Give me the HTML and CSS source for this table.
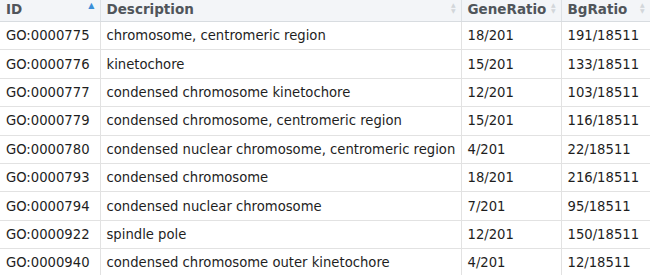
FILE: index.html
```html
<!DOCTYPE html>
<html>
<head>
<meta charset="utf-8">
<link rel="stylesheet" href="styles.css">
</head>
<body>
<table class="grid">
  <colgroup>
    <col class="c-id"><col class="c-desc"><col class="c-gene"><col class="c-bg">
  </colgroup>
  <thead>
    <tr>
      <th><span class="hd">ID</span><span class="sort active">&#9650;</span></th>
      <th><span class="hd">Description</span><span class="sort"><span>&#9650;</span><span>&#9660;</span></span></th>
      <th><span class="hd">GeneRatio</span><span class="sort"><span>&#9650;</span><span>&#9660;</span></span></th>
      <th><span class="hd">BgRatio</span><span class="sort"><span>&#9650;</span><span>&#9660;</span></span></th>
    </tr>
  </thead>
  <tbody>
    <tr><td>GO:0000775</td><td>chromosome, centromeric region</td><td>18/201</td><td>191/18511</td></tr>
    <tr><td>GO:0000776</td><td>kinetochore</td><td>15/201</td><td>133/18511</td></tr>
    <tr><td>GO:0000777</td><td>condensed chromosome kinetochore</td><td>12/201</td><td>103/18511</td></tr>
    <tr><td>GO:0000779</td><td>condensed chromosome, centromeric region</td><td>15/201</td><td>116/18511</td></tr>
    <tr><td>GO:0000780</td><td>condensed nuclear chromosome, centromeric region</td><td>4/201</td><td>22/18511</td></tr>
    <tr><td>GO:0000793</td><td>condensed chromosome</td><td>18/201</td><td>216/18511</td></tr>
    <tr><td>GO:0000794</td><td>condensed nuclear chromosome</td><td>7/201</td><td>95/18511</td></tr>
    <tr><td>GO:0000922</td><td>spindle pole</td><td>12/201</td><td>150/18511</td></tr>
    <tr><td>GO:0000940</td><td>condensed chromosome outer kinetochore</td><td>4/201</td><td>12/18511</td></tr>
  </tbody>
</table>
</body>
</html>
```

FILE: styles.css
```css
html, body {
  margin: 0;
  padding: 0;
  background: #ffffff;
  overflow: hidden;
}
.grid {
  border-collapse: collapse;
  table-layout: fixed;
  width: 650px;
  font-family: "DejaVu Sans", "Liberation Sans", sans-serif;
  font-size: 13.2px;
  color: #1e1e1e;
}
.c-id { width: 100px; }
.c-desc { width: 361px; }
.c-gene { width: 100px; }
.c-bg { width: 89px; }
.grid th {
  position: relative;
  height: 21px;
  padding: 0 6px;
  text-align: left;
  font-weight: bold;
  font-size: 13.5px;
  color: #50555b;
  background: #f3f5f8;
  border-right: 1px solid #dde1e5;
  border-bottom: 1px solid #d8dce0;
  line-height: 18px;
  vertical-align: top;
  white-space: nowrap;
  overflow: hidden;
}
.grid td {
  height: 27.4px;
  padding: 0 6px;
  border-right: 1px solid #e2e2e2;
  border-bottom: 1px solid #e2e2e2;
  white-space: nowrap;
  overflow: hidden;
}
.sort {
  position: absolute;
  right: 5px;
  top: 2px;
  display: flex;
  flex-direction: column;
  font-size: 6px;
  line-height: 6px;
  color: #d2d6da;
}
.sort.active {
  color: #3c8fd8;
  font-size: 8px;
  top: 3px;
}
```
